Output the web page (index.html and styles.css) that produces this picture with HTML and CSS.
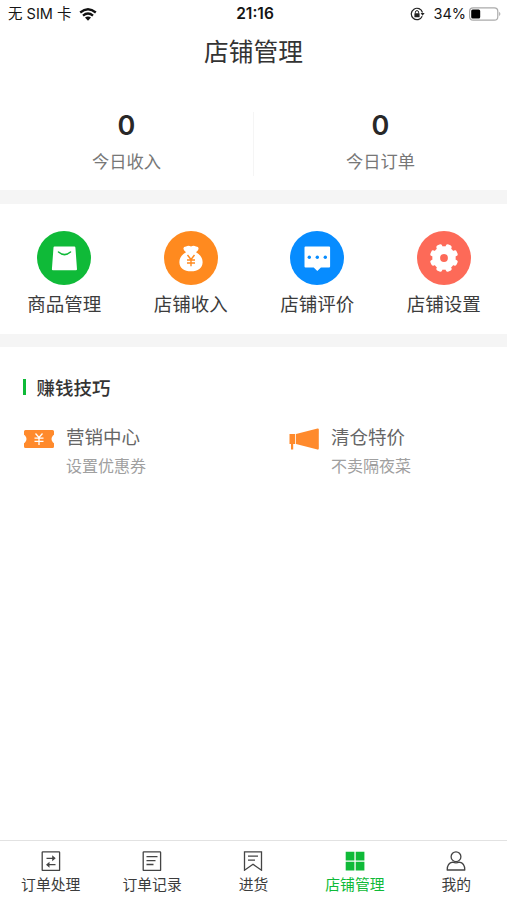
FILE: index.html
```html
<!DOCTYPE html>
<html lang="zh-CN">
<head>
<meta charset="utf-8">
<title>店铺管理</title>
<link rel="stylesheet" href="styles.css">
</head>
<body>
<div class="app">
  <div class="status">
    <div class="carrier"><span>无 SIM 卡</span>
      <svg width="18" height="13" viewBox="0 0 18 13"><g fill="none" stroke="#111" stroke-width="2.3"><path d="M1.2 4.5Q9-2 16.8 4.5"/><path d="M4 7.6q5-4.2 10 0"/></g><path d="M6 9.6q3-2.4 6 0L9 12.8z" fill="#111"/></svg>
    </div>
    <div class="time">21:16</div>
    <div class="power">
      <svg width="15" height="14" viewBox="0 0 15 14"><path d="M12.2 9.3A5.7 5.7 0 1 1 12.5 5.5" fill="none" stroke="#222" stroke-width="1.2"/><path d="M10.6 6h4l-2 2.8z" fill="#222"/><rect x="4.4" y="6.2" width="5.2" height="4" rx=".5" fill="#222"/><path d="M5.4 6.5V5.2a1.6 1.6 0 0 1 3.2 0v1.3" fill="none" stroke="#222"/></svg>
      <span>34%</span>
      <svg width="33" height="14" viewBox="0 0 33 14"><rect x=".6" y=".8" width="28.2" height="12.4" rx="3.5" fill="#fff" stroke="#aaa" stroke-width="1.2"/><rect x="2.2" y="2.5" width="9" height="9" rx="1.5" fill="#000"/><path d="M30.3 4.8q2 2.2 0 4.4z" fill="#999"/></svg>
    </div>
  </div>
  <h1 class="title">店铺管理</h1>
  <section class="stats">
    <div class="stat"><b>0</b><span>今日收入</span></div>
    <div class="stat"><b>0</b><span>今日订单</span></div>
  </section>
  <section class="menu">
    <div class="entry">
      <svg width="54" height="54" viewBox="0 0 54 54"><circle cx="27" cy="27" r="27" fill="#0fba38"/><path d="M17.5 15.5h19.8q1 0 1.1 1l1.6 21.8q0 1-1 1H15.9q-1 0-1-1l1.6-21.8q0-1 1-1z" fill="#fff"/><path d="M21.5 21q6 5.2 12 0" fill="none" stroke="#0fba38" stroke-width="1.5" stroke-linecap="round"/></svg>
      <span>商品管理</span></div>
    <div class="entry">
      <svg width="54" height="54" viewBox="0 0 54 54"><circle cx="27" cy="27" r="27" fill="#ff8a1f"/><path d="M20 19.2q-1.8-3.4 2-3.6 2.5-1.6 5 0 2.5-1.6 5 0 3.8.2 2 3.6-1 1.2-2 2.1c4.5 2.4 6.8 6 6.6 10.2-.2 5.6-4.6 8.800-11.600 8.800s-11.400-3.200-11.600-8.800c-.2-4.200 2.100-7.800 6.600-10.200q-1-.9-2-2.100z" fill="#fff"/><path d="M23.500 24l3.500 4.500 3.500-4.500M27 28.500v6.700M23 29h8M23 32h8" fill="none" stroke="#ff8a1f" stroke-width="1.400"/></svg>
      <span>店铺收入</span></div>
    <div class="entry">
      <svg width="54" height="54" viewBox="0 0 54 54"><circle cx="27" cy="27" r="27" fill="#078cff"/><path d="M15.500 15.500h23.600q1 0 1 1v19q0 1-1 1h-8.200L27.300 40l-3.600-3.500h-8.200q-1 0-1-1v-19q0-1 1-1z" fill="#fff"/><g fill="#078cff"><circle cx="19.300" cy="26.300" r="1.700"/><circle cx="27.300" cy="26.300" r="1.700"/><circle cx="35.300" cy="26.300" r="1.700"/></g></svg>
      <span>店铺评价</span></div>
    <div class="entry">
      <svg width="54" height="54" viewBox="0 0 54 54"><circle cx="27" cy="27" r="27" fill="#fd6a58"/><g fill="#fff"><circle cx="27" cy="27" r="11.700"/><rect x="24" y="12.800" width="6" height="28.400" rx="2" transform="rotate(22.500 27 27)"/><rect x="24" y="12.800" width="6" height="28.400" rx="2" transform="rotate(67.500 27 27)"/><rect x="24" y="12.800" width="6" height="28.400" rx="2" transform="rotate(112.500 27 27)"/><rect x="24" y="12.800" width="6" height="28.400" rx="2" transform="rotate(157.500 27 27)"/></g><circle cx="27" cy="27" r="3.900" fill="#fd6a58"/></svg>
      <span>店铺设置</span></div>
  </section>
  <section class="tips">
    <h2>赚钱技巧</h2>
    <div class="tiplist">
      <div class="tip">
        <svg width="30" height="22" viewBox="0 0 30 22"><path d="M1.500 2h27q1.500 0 1.500 1.500v3.200l-1 .8q-3 3.500 0 7l1 .8v3.200q0 1.500-1.500 1.500h-27Q0 20 0 18.500v-3.200l1-.8q3-3.500 0-7l-1-.8V3.500Q0 2 1.500 2z" fill="#ff8a2c"/><path d="M11.500 5.500l3.500 4 3.500-4M15 9.500v7.500M10.500 10.200h9M10.500 13.400h9" fill="none" stroke="#fff" stroke-width="1.300"/></svg>
        <div class="copy"><strong>营销中心</strong><span>设置优惠券</span></div>
      </div>
      <div class="tip">
        <svg width="30" height="22" viewBox="0 0 30 22"><path d="M.5 6H6.200v10H4.200v5.500H2V16H.500z" fill="#ff8a2c"/><path d="M7 6L28.500.600q1.300-.2 1.300 1v19q0 1.200-1.300 1L7 16z" fill="#ff8a2c"/></svg>
        <div class="copy"><strong>清仓特价</strong><span>不卖隔夜菜</span></div>
      </div>
    </div>
  </section>
  <nav class="tabs">
    <div class="tab"><svg width="20" height="20" viewBox="0 0 20 20"><g fill="none" stroke="#444" stroke-width="1.300"><rect x="1.200" y=".8" width="17.400" height="18.700" rx=".6"/><path d="M5.500 7.300h8M6.500 13.700h8"/></g><path d="M11.200 4.300l3.500 3-3.500 3zM8.500 10.700l-3.500 3 3.500 3z" fill="#444"/></svg><span>订单处理</span></div>
    <div class="tab"><svg width="20" height="20" viewBox="0 0 20 20"><g fill="none" stroke="#444" stroke-width="1.300"><rect x="1.200" y=".8" width="17.400" height="18.700" rx=".6"/><path d="M4.500 5.700h11M4.500 9.700h9M4.500 13.500h7"/></g></svg><span>订单记录</span></div>
    <div class="tab"><svg width="20" height="20" viewBox="0 0 20 20"><path d="M1.500.8h17v18.400L10 13.300l-8.500 5.900zM5 5.200h10M5 9.200h7" fill="none" stroke="#444" stroke-width="1.300"/></svg><span>进货</span></div>
    <div class="tab active"><svg width="20" height="20" viewBox="0 0 20 20"><path d="M.7.700h8.700v8.700H.7zM10.700.700h8.700v8.700h-8.700zM.7 10.800h8.700v8.700H.7zM10.700 10.800h8.700v8.700h-8.700z" fill="#0fba38"/></svg><span>店铺管理</span></div>
    <div class="tab"><svg width="20" height="20" viewBox="0 0 20 20"><g fill="none" stroke="#444" stroke-width="1.300"><circle cx="10" cy="5.700" r="4.900"/><path d="M1.200 19q0-7 5.500-7.800 3.300 1.200 6.600 0 5.500.8 5.500 7.800z" stroke-linejoin="round"/></g></svg><span>我的</span></div>
  </nav>
</div>
</body>
</html>
```
FILE: styles.css
```css
* { box-sizing: border-box; }
body { margin: 0; background: #fff; color: #3c3c3c; font-family: "Noto Sans CJK SC", sans-serif; }
svg { display: block; flex: none; }
.app { height: 900px; display: flex; flex-direction: column; }
.status { height: 28px; padding: 0 5px 0 8px; display: grid; grid-template-columns: 1fr auto 1fr; align-items: center; color: #151515; font-family: Inter, "Noto Sans CJK SC", sans-serif; font-size: 14.5px; line-height: 20px; }
.carrier { display: flex; align-items: center; gap: 8px; }
.time { font-weight: 600; font-size: 15.5px; }
.power { display: flex; align-items: center; justify-content: flex-end; }
.power span { margin: 0 3px 0 8px; }
.title { margin: 0; height: 72px; padding-top: 4px; font-size: 24.7px; line-height: 36px; font-weight: 400; text-align: center; color: #333; }
.stats { height: 90px; display: flex; padding-top: 12px; }
.stat { flex: 1; height: 64px; display: flex; flex-direction: column; align-items: center; }
.stat:first-child { border-right: 1px solid #f5f5f5; }
.stat b { font: 600 27px/28px Inter, sans-serif; color: #282828; }
.stat span { margin-top: 9px; font-size: 17.3px; line-height: 24px; color: #777; }
.menu { height: 157px; border-top: 14px solid #f5f5f5; border-bottom: 13px solid #f5f5f5; padding: 26.5px 0 0 1px; display: grid; grid-template-columns: repeat(4, 1fr); }
.entry { display: flex; flex-direction: column; align-items: center; }
.entry span { margin-top: 4px; font-size: 18.5px; line-height: 28px; white-space: nowrap; }
.tips { flex: 1; padding: 27px 22.5px 0; }
h2 { margin: 0; display: flex; align-items: center; gap: 11px; font-size: 18.5px; line-height: 26px; font-weight: 500; color: #333; }
h2::before { content: ""; width: 3px; height: 16px; background: #0fba38; }
.tiplist { display: grid; grid-template-columns: 265px 1fr; margin-top: 22px; padding-left: 1.5px; }
.tip { display: flex; gap: 12px; }
.tip svg { margin-top: 6px; }
.copy { display: flex; flex-direction: column; white-space: nowrap; }
.copy strong { font-size: 18.5px; line-height: 28px; font-weight: 400; color: #666; }
.copy span { margin-top: 2px; font-size: 16px; line-height: 26px; color: #a0a0a0; }
.tabs { height: 60px; border-top: 1px solid #e2e2e2; display: grid; grid-template-columns: repeat(5, 1fr); padding-top: 10px; }
.tab { display: flex; flex-direction: column; align-items: center; }
.tab span { margin-top: 3px; font-size: 14.8px; line-height: 20px; }
.active { color: #0fba38; }
```
